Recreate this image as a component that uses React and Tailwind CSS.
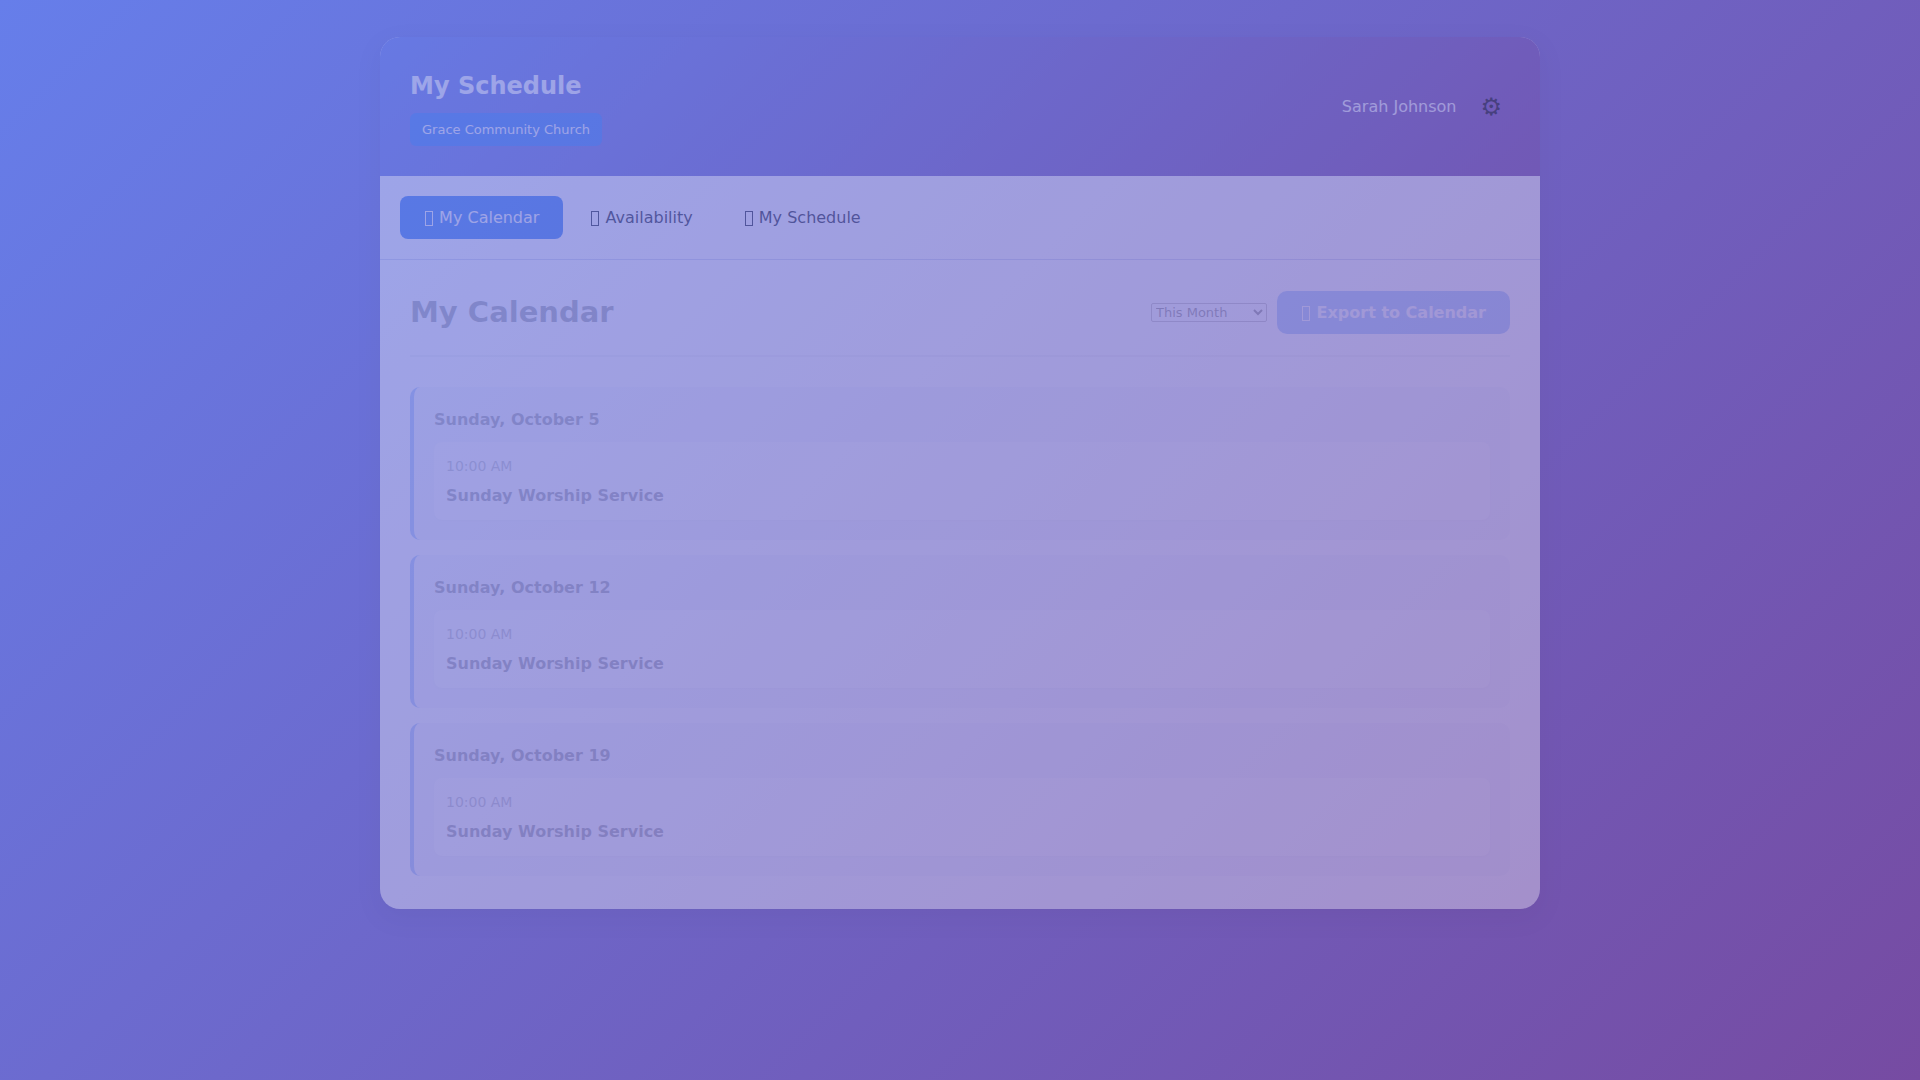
const services = [
  { date: 'Sunday, October 5', time: '10:00 AM', title: 'Sunday Worship Service' },
  { date: 'Sunday, October 12', time: '10:00 AM', title: 'Sunday Worship Service' },
  { date: 'Sunday, October 19', time: '10:00 AM', title: 'Sunday Worship Service' },
];

function BoxGlyph() {
  return (
    <span
      aria-hidden="true"
      className="mx-px inline-block h-[15px] w-2 border border-current align-[-3px]"
    />
  );
}

function NavTab({ label, active }) {
  return (
    <button
      type="button"
      aria-current={active ? 'page' : undefined}
      className={
        'h-[43px] rounded-lg px-6 text-base leading-[19px] ' +
        (active ? 'bg-[#3b82f6] text-white' : 'bg-transparent text-[#1f2937]')
      }
    >
      <BoxGlyph /> {label}
    </button>
  );
}

function ServiceDay({ date, time, title }) {
  return (
    <article className="rounded-[10px] border-l-4 border-[#3b82f6] bg-[#edf0fa] p-5">
      <h3 className="mb-2.5 text-base leading-[25px] font-semibold text-[#1f2937]">{date}</h3>
      <div className="rounded-lg bg-white p-3 shadow-xs">
        <div className="mb-[5px] text-sm leading-6 text-[#6b7280]">{time}</div>
        <div className="text-base leading-[25px] font-semibold text-[#1f2937]">{title}</div>
      </div>
    </article>
  );
}

export default function App() {
  return (
    <div className="min-h-screen bg-[linear-gradient(135deg,#667eea_0%,#764ba2_100%)] px-5 pt-[37px] pb-5 font-['DejaVu_Sans',sans-serif]">
      <div className="mx-auto max-w-[1160px] overflow-hidden rounded-[20px] bg-white opacity-35 shadow-[0_8px_24px_rgba(0,0,0,0.1)]">
        <header className="flex items-center justify-between bg-[linear-gradient(135deg,#667eea_0%,#764ba2_100%)] p-[30px] text-white">
          <div>
            <h1 className="mb-2 text-2xl leading-[38px] font-semibold">My Schedule</h1>
            <div className="w-fit rounded-md bg-[#3b82f6] px-3 py-1.5 text-[13px] leading-[21px]">
              Grace Community Church
            </div>
          </div>
          <div className="flex items-center gap-4">
            <span className="text-base">Sarah Johnson</span>
            <button type="button" aria-label="Settings" className="p-2 text-2xl leading-7 text-black">
              ⚙
            </button>
          </div>
        </header>

        <nav className="flex gap-[3px] border-b border-[#d5daf0] p-5">
          <NavTab label="My Calendar" active />
          <NavTab label="Availability" />
          <NavTab label="My Schedule" />
        </nav>

        <main className="px-[30px] pt-[30px] pb-[33px] opacity-37">
          <div className="mb-[30px] flex items-center justify-between border-b-2 border-[#e5e7eb] pb-5">
            <h2 className="text-[29px] leading-[45px] font-semibold text-[#1f2937]">My Calendar</h2>
            <div className="flex items-center gap-2.5">
              <select
                aria-label="Period"
                defaultValue="This Month"
                className="h-[19px] w-[116px] rounded-xs border border-[#767676] bg-white text-[13px] leading-4 text-black"
              >
                <option>This Month</option>
                <option>Next Month</option>
                <option>All Upcoming</option>
              </select>
              <button
                type="button"
                className="h-[43px] rounded-[10px] bg-[#3b82f6] px-6 text-base leading-[19px] font-semibold text-white"
              >
                <BoxGlyph /> Export to Calendar
              </button>
            </div>
          </div>
          <div className="flex flex-col gap-[15px]">
            {services.map((s) => (
              <ServiceDay key={s.date} {...s} />
            ))}
          </div>
        </main>
      </div>
    </div>
  );
}
